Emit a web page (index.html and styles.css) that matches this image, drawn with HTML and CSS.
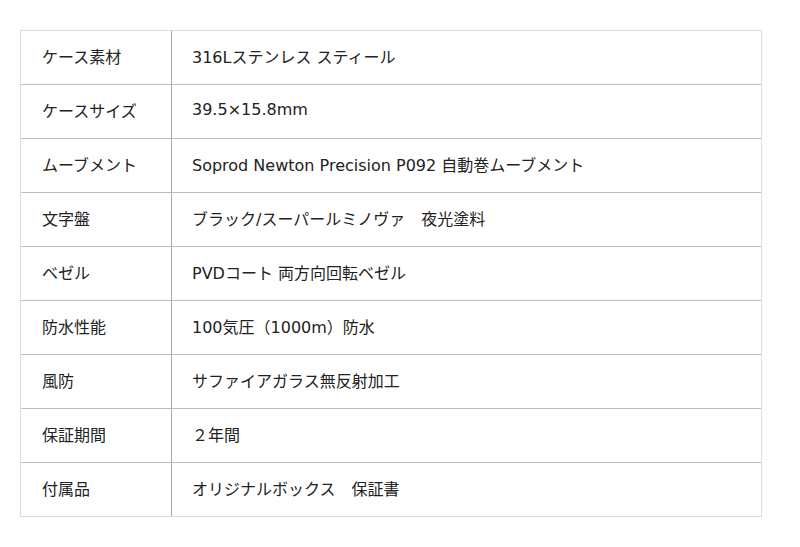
FILE: index.html
```html
<!DOCTYPE html>
<html lang="ja">
<head>
<meta charset="utf-8">
<link rel="stylesheet" href="styles.css">
</head>
<body>
<div class="spec">
  <div class="row"><div class="th">ケース素材</div><div class="td">316Lステンレス スティール</div></div>
  <div class="row"><div class="th">ケースサイズ</div><div class="td">39.5×15.8mm</div></div>
  <div class="row"><div class="th">ムーブメント</div><div class="td">Soprod Newton Precision P092 自動巻ムーブメント</div></div>
  <div class="row"><div class="th">文字盤</div><div class="td">ブラック/スーパールミノヴァ　夜光塗料</div></div>
  <div class="row"><div class="th">ベゼル</div><div class="td">PVDコート 両方向回転ベゼル</div></div>
  <div class="row"><div class="th">防水性能</div><div class="td">100気圧（1000m）防水</div></div>
  <div class="row"><div class="th">風防</div><div class="td">サファイアガラス無反射加工</div></div>
  <div class="row"><div class="th">保証期間</div><div class="td">２年間</div></div>
  <div class="row"><div class="th">付属品</div><div class="td">オリジナルボックス　保証書</div></div>
</div>
</body>
</html>
```
FILE: styles.css
```css
html, body {
  margin: 0;
  padding: 0;
  background: #fff;
}
body {
  padding: 30px 0 0 20px;
  font-family: "DejaVu Sans", "Noto Sans CJK JP", sans-serif;
  font-size: 16px;
  color: #222;
}
.spec {
  width: 742px;
  box-sizing: border-box;
  border: 1px solid #dcdcdc;
}
.row {
  display: grid;
  grid-template-columns: 151px 1fr;
  height: 53px;
}
.row + .row {
  border-top: 1px solid #bdbdbd;
}
.th {
  border-right: 1px solid #a8a8a8;
  padding: 0 0 4px 21px;
  display: flex;
  align-items: center;
}
.td {
  padding: 0 0 4px 20px;
  display: flex;
  align-items: center;
}
```
